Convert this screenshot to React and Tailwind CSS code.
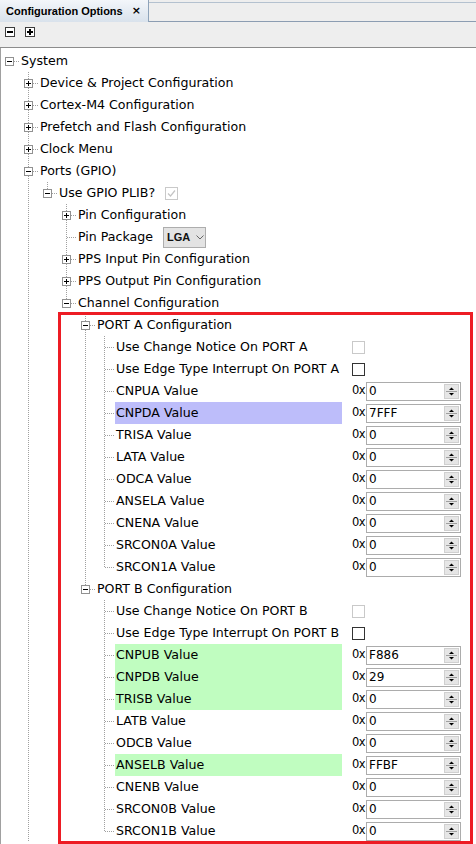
import React from 'react';

const portA = {
    label: 'PORT A Configuration',
    open: true,
    children: [
        { label: 'Use Change Notice On PORT A', control: { type: 'check', disabled: true } },
        { label: 'Use Edge Type Interrupt On PORT A', control: { type: 'check' } },
        { label: 'CNPUA Value', control: { type: 'hex', value: '0' } },
        { label: 'CNPDA Value', control: { type: 'hex', value: '7FFF' }, hl: 'blue' },
        { label: 'TRISA Value', control: { type: 'hex', value: '0' } },
        { label: 'LATA Value', control: { type: 'hex', value: '0' } },
        { label: 'ODCA Value', control: { type: 'hex', value: '0' } },
        { label: 'ANSELA Value', control: { type: 'hex', value: '0' } },
        { label: 'CNENA Value', control: { type: 'hex', value: '0' } },
        { label: 'SRCON0A Value', control: { type: 'hex', value: '0' } },
        { label: 'SRCON1A Value', control: { type: 'hex', value: '0' } },
    ],
};

const portB = {
    label: 'PORT B Configuration',
    open: true,
    children: [
        { label: 'Use Change Notice On PORT B', control: { type: 'check', disabled: true } },
        { label: 'Use Edge Type Interrupt On PORT B', control: { type: 'check' } },
        { label: 'CNPUB Value', control: { type: 'hex', value: 'F886' }, hl: 'green' },
        { label: 'CNPDB Value', control: { type: 'hex', value: '29' }, hl: 'green' },
        { label: 'TRISB Value', control: { type: 'hex', value: '0' }, hl: 'green' },
        { label: 'LATB Value', control: { type: 'hex', value: '0' } },
        { label: 'ODCB Value', control: { type: 'hex', value: '0' } },
        { label: 'ANSELB Value', control: { type: 'hex', value: 'FFBF' }, hl: 'green' },
        { label: 'CNENB Value', control: { type: 'hex', value: '0' } },
        { label: 'SRCON0B Value', control: { type: 'hex', value: '0' } },
        { label: 'SRCON1B Value', control: { type: 'hex', value: '0' } },
    ],
};

const tree = {
    label: 'System',
    open: true,
    children: [
        { label: 'Device & Project Configuration', closed: true },
        { label: 'Cortex-M4 Configuration', closed: true },
        { label: 'Prefetch and Flash Configuration', closed: true },
        { label: 'Clock Menu', closed: true },
        {
            label: 'Ports (GPIO)',
            open: true,
            more: true,
            children: [
                {
                    label: 'Use GPIO PLIB?',
                    open: true,
                    control: { type: 'check', disabled: true, checked: true },
                    children: [
                        { label: 'Pin Configuration', closed: true },
                        { label: 'Pin Package', control: { type: 'select', value: 'LGA' } },
                        { label: 'PPS Input Pin Configuration', closed: true },
                        { label: 'PPS Output Pin Configuration', closed: true },
                        { label: 'Channel Configuration', open: true, children: [portA, portB] },
                    ],
                },
            ],
        },
    ],
};

// flatten the tree into rows, remembering which guide lines run past each row
function flatten(node, level, guides, isLast, isRoot, out) {
    const last = isLast && !node.more;
    out.push({ ...node, level, guides, last, root: isRoot });
    if (node.open && node.children) {
        const next = [...guides, !last];
        node.children.forEach((c, i) =>
            flatten(c, level + 1, next, i === node.children.length - 1, false, out)
        );
    }
    return out;
}

const rows = flatten(tree, 0, [], true, true, []);

const dot = { stroke: '#a0a0a0', strokeWidth: 1, strokeDasharray: '1 1', shapeRendering: 'crispEdges' };

function GuideCell({ line }) {
    return (
        <svg width="19" height="22" className="shrink-0 block">
            {line && <line x1="8.5" y1="0" x2="8.5" y2="22" style={dot} />}
        </svg>
    );
}

function NodeCell({ row }) {
    const expandable = row.open || row.closed;
    return (
        <svg width="19" height="22" className="shrink-0 block">
            {!row.root && <line x1="8.5" y1="0" x2="8.5" y2="11" style={dot} />}
            {!row.last && <line x1="8.5" y1="12" x2="8.5" y2="22" style={dot} />}
            <line x1={expandable ? 13 : 9} y1="11.5" x2="19" y2="11.5" style={dot} />
            {expandable && (
                <g shapeRendering="crispEdges">
                    <rect x="4.5" y="7.5" width="8" height="8" fill="#fff" stroke="#919191" />
                    <line x1="6" y1="11.5" x2="11" y2="11.5" stroke="#000" />
                    {row.closed && <line x1="8.5" y1="9" x2="8.5" y2="14" stroke="#000" />}
                </g>
            )}
        </svg>
    );
}

function CheckBox({ disabled, checked }) {
    return (
        <div
            className={`w-[13px] h-[13px] border bg-white flex items-center justify-center ${
                disabled ? 'border-[#c9c9c9]' : 'border-[#333]'
            }`}
        >
            {checked && (
                <svg width="11" height="11" viewBox="0 0 11 11">
                    <path d="M2 5.5 L4.5 8 L9 2.5" fill="none" stroke="#c4c4c4" strokeWidth="1.2" />
                </svg>
            )}
        </div>
    );
}

function Spinner() {
    return (
        <div className="w-[15px] h-[15px] bg-[#e6e6e6] border border-[#d0d0d0] flex flex-col items-center justify-center">
            <svg width="13" height="13" viewBox="0 0 13 13">
                <path d="M4 5 L6.5 2.5 L9 5 Z" fill="#000" />
                <line x1="1" y1="6.5" x2="12" y2="6.5" stroke="#a0a0a0" />
                <path d="M4 8 L9 8 L6.5 10.5 Z" fill="#000" />
            </svg>
        </div>
    );
}

function HexField({ value }) {
    return (
        <div className="flex items-center">
            <span className="w-[14px] text-[11.5px] tracking-[-0.6px]">0x</span>
            <div className="w-[95px] h-[19px] border border-[#acacac] bg-white flex items-center justify-between pl-[2px] pr-[1px]">
                <span className="text-[12px] leading-none">{value}</span>
                <Spinner />
            </div>
        </div>
    );
}

function Select({ value }) {
    return (
        <div className="w-[43px] h-[21px] bg-[#e3e3e3] border border-[#adadad] flex items-center pl-[3px] gap-[6px]">
            <span className="text-[11px] font-bold text-[#111] font-['Liberation_Sans',sans-serif]">{value}</span>
            <svg width="8" height="5" viewBox="0 0 8 5">
                <path d="M0.5 0.5 L4 4 L7.5 0.5" fill="none" stroke="#666" />
            </svg>
        </div>
    );
}

function Row({ row }) {
    const c = row.control;
    const wide = c && (c.type === 'hex' || row.level === 5);
    const bg = row.hl === 'blue' ? 'bg-[#bdbdfa]' : row.hl === 'green' ? 'bg-[#c0fdc0]' : '';
    return (
        <div className="flex h-[22px] items-center">
            {row.guides.map((g, i) => (
                <GuideCell key={i} line={g} />
            ))}
            <NodeCell row={row} />
            {wide ? (
                <>
                    <div className={`w-[227px] h-[22px] pl-[1px] flex items-center whitespace-nowrap ${bg}`}>
                        {row.label}
                    </div>
                    <div className="ml-[10px]">
                        {c.type === 'hex' ? <HexField value={c.value} /> : <CheckBox {...c} />}
                    </div>
                </>
            ) : (
                <>
                    <span className="pl-[1px] whitespace-nowrap">{row.label}</span>
                    {c && c.type === 'check' && (
                        <div className="ml-[10px]">
                            <CheckBox {...c} />
                        </div>
                    )}
                    {c && c.type === 'select' && (
                        <div className="ml-[10px]">
                            <Select value={c.value} />
                        </div>
                    )}
                </>
            )}
        </div>
    );
}

const App = () => {
    return (
        <div className="w-[476px] h-[844px] overflow-hidden bg-white text-black font-['DejaVu_Sans',sans-serif] text-[12.6px] flex flex-col">
            {/* Tab header */}
            <div className="h-[22px] flex bg-[#eeeeee] shrink-0">
                <div className="w-[149px] h-[22px] flex items-center justify-between pl-[6px] pr-[7px] border-r border-[#8ea3ba] bg-gradient-to-b from-[#f3f6fa] to-[#d9e2ec] whitespace-nowrap">
                    <span className="font-bold text-[11px] font-['Liberation_Sans',sans-serif]">Configuration Options</span>
                    <span className="font-bold text-[11px]">×</span>
                </div>
                <div className="flex-1 border-t border-t-[#b4c1cf] border-b border-b-[#8c9db2] mt-[2px] bg-[#eeeeee]" />
            </div>

            {/* Toolbar */}
            <div className="h-[26px] bg-[#eeeeee] border-b border-[#8c8c8c] flex items-start gap-[10px] pl-[5px] pt-[5px] shrink-0">
                <svg width="10" height="10" shapeRendering="crispEdges">
                    <rect x="0.5" y="0.5" width="9" height="9" fill="#fff" stroke="#3c3c3c" />
                    <line x1="2" y1="5" x2="8" y2="5" stroke="#000" strokeWidth="2" />
                </svg>
                <svg width="10" height="10" shapeRendering="crispEdges">
                    <rect x="0.5" y="0.5" width="9" height="9" fill="#fff" stroke="#3c3c3c" />
                    <line x1="2" y1="5" x2="8" y2="5" stroke="#000" strokeWidth="2" />
                    <line x1="5" y1="2" x2="5" y2="8" stroke="#000" strokeWidth="2" />
                </svg>
            </div>

            {/* Tree */}
            <div className="relative flex-1 border-l border-[#a0a0a0] pt-[2px]">
                {rows.map((r, i) => (
                    <Row key={i} row={r} />
                ))}
                {/* red annotation frame */}
                <div className="absolute left-[57px] top-[264px] w-[415px] h-[532px] border-[3px] border-[#ed1c24] pointer-events-none" />
            </div>
        </div>
    );
};

export default App;
